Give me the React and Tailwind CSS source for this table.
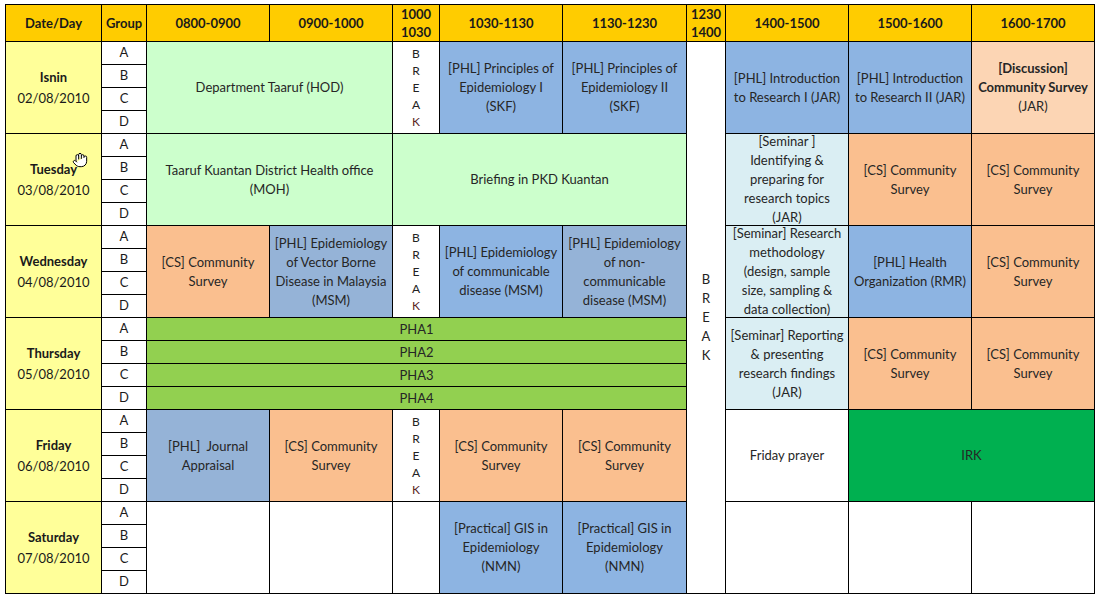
import { Hand } from "lucide-react";

const font = { fontFamily: "Lato, 'Open Sans', sans-serif" };

const BLUE = "bg-[#8db4e2]";
const GREY_BLUE = "bg-[#95b3d7]";
const PEACH = "bg-[#fabf8f]";
const LIGHT_PEACH = "bg-[#fcd5b4]";
const SEMINAR = "bg-[#daeef3]";
const MINT = "bg-[#ccffcc]";
const PHA = "bg-[#92d050]";
const IRK = "bg-[#00b050]";

const headers = [
  { pos: "col-start-1", lines: ["Date/Day"] },
  { pos: "col-start-2", lines: ["Group"] },
  { pos: "col-start-3", lines: ["0800-0900"] },
  { pos: "col-start-4", lines: ["0900-1000"] },
  { pos: "col-start-5", lines: ["1000", "1030"] },
  { pos: "col-start-6", lines: ["1030-1130"] },
  { pos: "col-start-7", lines: ["1130-1230"] },
  { pos: "col-start-8", lines: ["1230", "1400"] },
  { pos: "col-start-9", lines: ["1400-1500"] },
  { pos: "col-start-10", lines: ["1500-1600"] },
  { pos: "col-start-11", lines: ["1600-1700"] },
];

const days = [
  { pos: "row-start-2", day: "Isnin", date: "02/08/2010" },
  { pos: "row-start-6", day: "Tuesday", date: "03/08/2010", cursor: true },
  { pos: "row-start-10", day: "Wednesday", date: "04/08/2010" },
  { pos: "row-start-14", day: "Thursday", date: "05/08/2010" },
  { pos: "row-start-18", day: "Friday", date: "06/08/2010" },
  { pos: "row-start-22", day: "Saturday", date: "07/08/2010" },
];

const groupRows = [
  "row-start-2", "row-start-3", "row-start-4", "row-start-5",
  "row-start-6", "row-start-7", "row-start-8", "row-start-9",
  "row-start-10", "row-start-11", "row-start-12", "row-start-13",
  "row-start-14", "row-start-15", "row-start-16", "row-start-17",
  "row-start-18", "row-start-19", "row-start-20", "row-start-21",
  "row-start-22", "row-start-23", "row-start-24", "row-start-25",
];

const CS = ["[CS] Community", "Survey"];

const sessions = [
  // Isnin
  { pos: "col-start-3 col-span-2 row-start-2 row-span-4", bg: MINT, lines: ["Department Taaruf (HOD)"] },
  { pos: "col-start-5 row-start-2 row-span-4", brk: true },
  { pos: "col-start-6 row-start-2 row-span-4", bg: BLUE, lines: ["[PHL] Principles of", "Epidemiology I", "(SKF)"] },
  { pos: "col-start-7 row-start-2 row-span-4", bg: BLUE, lines: ["[PHL] Principles of", "Epidemiology II", "(SKF)"] },
  { pos: "col-start-9 row-start-2 row-span-4", bg: BLUE, lines: ["[PHL] Introduction", "to Research I (JAR)"] },
  { pos: "col-start-10 row-start-2 row-span-4", bg: BLUE, lines: ["[PHL] Introduction", "to Research II (JAR)"] },
  { pos: "col-start-11 row-start-2 row-span-4", bg: LIGHT_PEACH, lines: ["[Discussion]", "Community Survey", "(JAR)"], bold: [0, 1] },
  // Tuesday
  { pos: "col-start-3 col-span-2 row-start-6 row-span-4", bg: MINT, lines: ["Taaruf Kuantan District Health office", "(MOH)"] },
  { pos: "col-start-5 col-span-3 row-start-6 row-span-4", bg: MINT, lines: ["Briefing in PKD Kuantan"] },
  { pos: "col-start-9 row-start-6 row-span-4", bg: SEMINAR, lines: ["[Seminar ]", "Identifying &", "preparing for", "research topics", "(JAR)"] },
  { pos: "col-start-10 row-start-6 row-span-4", bg: PEACH, lines: CS },
  { pos: "col-start-11 row-start-6 row-span-4", bg: PEACH, lines: CS },
  // Wednesday
  { pos: "col-start-3 row-start-10 row-span-4", bg: PEACH, lines: CS },
  { pos: "col-start-4 row-start-10 row-span-4", bg: GREY_BLUE, lines: ["[PHL] Epidemiology", "of Vector Borne", "Disease in Malaysia", "(MSM)"] },
  { pos: "col-start-5 row-start-10 row-span-4", brk: true },
  { pos: "col-start-6 row-start-10 row-span-4", bg: BLUE, lines: ["[PHL] Epidemiology", "of communicable", "disease (MSM)"] },
  { pos: "col-start-7 row-start-10 row-span-4", bg: GREY_BLUE, lines: ["[PHL] Epidemiology", "of non-", "communicable", "disease (MSM)"] },
  { pos: "col-start-9 row-start-10 row-span-4", bg: SEMINAR, lines: ["[Seminar] Research", "methodology", "(design, sample", "size, sampling &", "data collection)"] },
  { pos: "col-start-10 row-start-10 row-span-4", bg: BLUE, lines: ["[PHL] Health", "Organization (RMR)"] },
  { pos: "col-start-11 row-start-10 row-span-4", bg: PEACH, lines: CS },
  // Thursday
  { pos: "col-start-3 col-span-5 row-start-14", bg: PHA, lines: ["PHA1"] },
  { pos: "col-start-3 col-span-5 row-start-15", bg: PHA, lines: ["PHA2"] },
  { pos: "col-start-3 col-span-5 row-start-16", bg: PHA, lines: ["PHA3"] },
  { pos: "col-start-3 col-span-5 row-start-17", bg: PHA, lines: ["PHA4"] },
  { pos: "col-start-9 row-start-14 row-span-4", bg: SEMINAR, lines: ["[Seminar] Reporting", "& presenting", "research findings", "(JAR)"] },
  { pos: "col-start-10 row-start-14 row-span-4", bg: PEACH, lines: CS },
  { pos: "col-start-11 row-start-14 row-span-4", bg: PEACH, lines: CS },
  // Friday
  { pos: "col-start-3 row-start-18 row-span-4", bg: GREY_BLUE, lines: ["[PHL]  Journal", "Appraisal"] },
  { pos: "col-start-4 row-start-18 row-span-4", bg: PEACH, lines: CS },
  { pos: "col-start-5 row-start-18 row-span-4", brk: true },
  { pos: "col-start-6 row-start-18 row-span-4", bg: PEACH, lines: CS },
  { pos: "col-start-7 row-start-18 row-span-4", bg: PEACH, lines: CS },
  { pos: "col-start-9 row-start-18 row-span-4", bg: "bg-white", lines: ["Friday prayer"] },
  { pos: "col-start-10 col-span-2 row-start-18 row-span-4", bg: IRK, lines: ["IRK"] },
  // Saturday
  { pos: "col-start-3 row-start-22 row-span-4", bg: "bg-white", lines: [] },
  { pos: "col-start-4 row-start-22 row-span-4", bg: "bg-white", lines: [] },
  { pos: "col-start-5 row-start-22 row-span-4", bg: "bg-white", lines: [] },
  { pos: "col-start-6 row-start-22 row-span-4", bg: BLUE, lines: ["[Practical] GIS in", "Epidemiology", "(NMN)"] },
  { pos: "col-start-7 row-start-22 row-span-4", bg: BLUE, lines: ["[Practical] GIS in", "Epidemiology", "(NMN)"] },
  { pos: "col-start-9 row-start-22 row-span-4", bg: "bg-white", lines: [] },
  { pos: "col-start-10 row-start-22 row-span-4", bg: "bg-white", lines: [] },
  { pos: "col-start-11 row-start-22 row-span-4", bg: "bg-white", lines: [] },
];

function VerticalBreak({ big }) {
  return (
    <div className={big ? "flex flex-col items-center text-[13px] leading-[19px] text-[#222]" : "flex flex-col items-center text-[12px] leading-[17px] text-[#222]"}>
      {["B", "R", "E", "A", "K"].map((l, i) => (
        <span key={i} className={l === "K" && !big ? "text-[#5a1f1f]" : ""}>{l}</span>
      ))}
    </div>
  );
}

export default function App() {
  return (
    <div className="min-h-screen bg-white pl-[5px] pt-[4px]" style={font}>
      <div className="grid w-fit gap-px bg-black p-px grid-cols-[95px_44px_122px_122px_46px_122px_123px_38px_122px_122px_122px] grid-rows-[36px_repeat(24,22px)]">
        {headers.map((h, i) => (
          <div key={i} className={`${h.pos} row-start-1 flex flex-col items-center justify-center bg-[#ffcc00] text-[13px] font-bold leading-[18px] text-[#1a1a1a]`}>
            {h.lines.map((l, j) => <span key={j}>{l}</span>)}
          </div>
        ))}

        <div className="col-start-8 row-start-2 row-span-24 flex items-center justify-center bg-white">
          <VerticalBreak big />
        </div>

        {days.map((d, i) => (
          <div key={i} className={`${d.pos} relative col-start-1 row-span-4 flex flex-col items-center justify-center bg-[#ffff99] text-[13px] leading-[21px] text-[#1a1a1a]`}>
            <span className="font-bold">{d.day}</span>
            <span>{d.date}</span>
            {d.cursor && (
              <Hand className="absolute left-[66px] top-[18px] h-[16px] w-[16px] fill-white text-black" strokeWidth={1.5} />
            )}
          </div>
        ))}

        {groupRows.map((r, i) => (
          <div key={i} className={`${r} col-start-2 flex items-center justify-center bg-white text-[13px] text-[#1a1a1a]`}>
            {["A", "B", "C", "D"][i % 4]}
          </div>
        ))}

        {sessions.map((s, i) => (
          <div key={i} className={`${s.pos} ${s.brk ? "bg-white" : s.bg} flex flex-col items-center justify-center text-center text-[13px] leading-[19px] text-[#262626]`}>
            {s.brk ? (
              <VerticalBreak />
            ) : (
              s.lines.map((l, j) => (
                <span key={j} className={s.bold && s.bold.includes(j) ? "whitespace-pre font-bold" : "whitespace-pre"}>{l}</span>
              ))
            )}
          </div>
        ))}
      </div>
    </div>
  );
}
